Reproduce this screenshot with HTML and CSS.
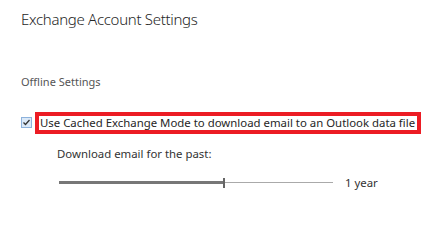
FILE: index.html
```html
<!DOCTYPE html>
<html lang="en">
<head>
    <meta charset="UTF-8">
    <title>Exchange Account Settings</title>
    <link rel="stylesheet" href="styles.css">
</head>
<body>
    <div class="page">
        <h1>Exchange Account Settings</h1>
        <h2>Offline Settings</h2>
        <div class="cached-row">
            <span class="checkbox">
                <svg width="11" height="11" viewBox="0 0 11 11">
                    <path d="M2.5 5.5 L4.5 7.5 L8.5 3" fill="none" stroke="#333" stroke-width="1.3"/>
                </svg>
            </span>
            <span class="highlight">Use Cached Exchange Mode to download email to an Outlook data file</span>
        </div>
        <div class="download">
            <div class="label">Download email for the past:</div>
            <div class="slider-row">
                <div class="slider">
                    <div class="filled"></div>
                    <div class="thumb"></div>
                    <div class="rest"></div>
                </div>
                <span class="value">1 year</span>
            </div>
        </div>
    </div>
</body>
</html>
```

FILE: styles.css
```css
body {
    margin: 0;
    background-color: #fff;
    font-family: "Noto Sans", "Open Sans", sans-serif;
    color: #333;
}
.page {
    padding: 8px 0 0 21px;
}
h1 {
    margin: 0;
    font-size: 15px;
    font-weight: 300;
    letter-spacing: -0.3px;
    color: #262626;
    line-height: 22px;
}
h2 {
    margin: 44px 0 0 0;
    font-size: 11px;
    font-weight: normal;
    color: #555;
    line-height: 16px;
}
.cached-row {
    display: flex;
    align-items: center;
    margin-top: 22px;
}
.checkbox {
    width: 9px;
    height: 9px;
    border: 1px solid #8db2dc;
    background-color: #dbe9f8;
    display: flex;
    margin-top: -2px;
}
.checkbox svg {
    margin: -1px;
}
.highlight {
    margin-left: 3px;
    border: 4px solid #ec1c24;
    padding: 0 2px 0 1px;
    font-size: 11.4px;
    line-height: 14px;
    color: #262626;
    white-space: nowrap;
}
.download {
    padding-left: 36px;
    margin-top: 12px;
}
.label {
    font-size: 11.4px;
    color: #333;
    line-height: 16px;
}
.slider-row {
    display: flex;
    align-items: center;
    margin-top: 13px;
}
.slider {
    display: flex;
    align-items: center;
    width: 274px;
    height: 10px;
    margin-left: 2px;
}
.filled {
    width: 164px;
    height: 3px;
    background-color: #777;
}
.thumb {
    width: 2px;
    height: 10px;
    background-color: #666;
}
.rest {
    flex: 1;
    height: 1px;
    background-color: #aaa;
}
.value {
    margin-left: 12px;
    font-size: 11.4px;
    color: #333;
}
```
